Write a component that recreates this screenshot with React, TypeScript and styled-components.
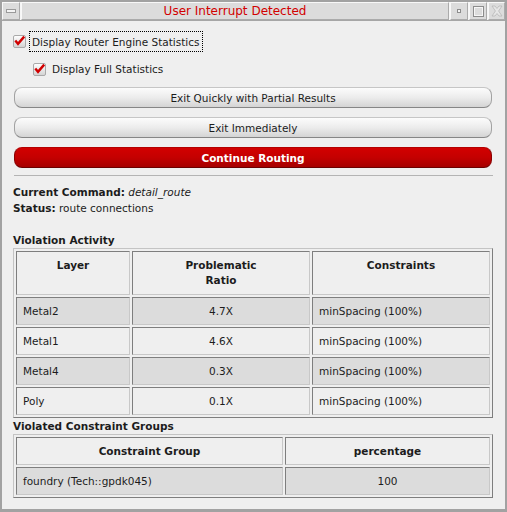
import React from "react";
import styled, { createGlobalStyle } from "styled-components";

const GlobalStyle = createGlobalStyle`
  html, body { margin: 0; padding: 0; background: #efefef; }
  body {
    font-family: "DejaVu Sans", sans-serif;
    font-size: 10.5px;
    color: #1c1c1c;
  }
  * { box-sizing: border-box; }
`;

const Window = styled.div`
  width: 507px;
  height: 512px;
  border: 2px solid #a2a2a2;
  border-bottom-width: 3px;
  background: #efefef;
  display: flex;
  flex-direction: column;
  overflow: hidden;
`;

const TitleBar = styled.div`
  display: flex;
  height: 19px;
  border-bottom: 1px solid #a6a6a6;
  background: #f6f6f6;
  gap: 1px;
`;

const TitleSeg = styled.div<{ $w?: number }>`
  ${(p) => (p.$w ? `width: ${p.$w}px;` : "flex: 1;")}
  height: 18px;
  background: #dcdcdc;
  border: 1px solid;
  border-color: #f8f8f8 #ababab #ababab #f8f8f8;
  display: flex;
  align-items: center;
  justify-content: center;
`;

const TitleText = styled.span`
  font-size: 12px;
  line-height: 16px;
  color: #d20000;
`;

const Content = styled.div`
  flex: 1;
  display: flex;
  flex-direction: column;
  padding: 0 12px 0 11px;
`;

const CheckRow = styled.div<{ $indent: number; $top: number; $h: number }>`
  display: flex;
  align-items: center;
  gap: 3px;
  height: ${(p) => p.$h}px;
  margin-top: ${(p) => p.$top}px;
  padding-left: ${(p) => p.$indent}px;
`;

const CheckLabel = styled.span<{ $focus?: boolean }>`
  display: inline-flex;
  align-items: center;
  height: 100%;
  padding: 0 2px;
  border: 1px dotted ${(p) => (p.$focus ? "#000" : "transparent")};
  line-height: 16px;
`;

const Buttons = styled.div`
  display: flex;
  flex-direction: column;
  gap: 9px;
  margin-top: 8px;
  padding: 0 1px;
`;

const Button = styled.button<{ $primary?: boolean }>`
  height: 21px;
  padding: 0;
  border-radius: 8px;
  border: 1px solid;
  border-color: ${(p) =>
    p.$primary ? "#b40000 #8a0000 #6c0000 #8a0000" : "#c6c6c6 #a2a2a2 #868686 #a2a2a2"};
  background: ${(p) =>
    p.$primary
      ? "linear-gradient(#d20000 0%, #c40000 50%, #a60000 100%)"
      : "linear-gradient(#fcfcfc 0%, #ececec 50%, #d4d4d4 100%)"};
  color: ${(p) => (p.$primary ? "#ffffff" : "#1c1c1c")};
  font-family: inherit;
  font-size: 10.5px;
  font-weight: ${(p) => (p.$primary ? "bold" : "normal")};
  line-height: 16px;
`;

const Separator = styled.div`
  height: 1px;
  margin: 7px 0 0 1px;
  background: #b4b4b4;
`;

const InfoBlock = styled.div`
  margin-top: 8px;
  line-height: 16px;
`;

const InfoLine = styled.div`
  height: 16px;
  white-space: nowrap;
`;

const Bold = styled.b`
  font-weight: bold;
`;

const Em = styled.i`
  font-style: italic;
`;

const SectionTitle = styled.div<{ $top: number }>`
  margin-top: ${(p) => p.$top}px;
  height: 16px;
  line-height: 16px;
  font-weight: bold;
`;

const Grid = styled.div<{ $cols: string; $rows: string }>`
  display: grid;
  grid-template-columns: ${(p) => p.$cols};
  grid-template-rows: ${(p) => p.$rows};
  gap: 2px;
  padding: 2px;
  width: 480px;
  border: 1px solid;
  border-color: #c4c4c4 #7e7e7e #7e7e7e #c4c4c4;
`;

const Cell = styled.div<{
  $head?: boolean;
  $shade?: boolean;
  $align?: "left" | "center";
  $top?: boolean;
}>`
  border: 1px solid;
  border-color: #7e7e7e #c8c8c8 #c8c8c8 #7e7e7e;
  background: ${(p) => (p.$shade ? "#dcdcdc" : "#efefef")};
  font-weight: ${(p) => (p.$head ? "bold" : "normal")};
  display: flex;
  flex-direction: column;
  justify-content: ${(p) => (p.$top ? "flex-start" : "center")};
  align-items: ${(p) => (p.$align === "left" ? "flex-start" : "center")};
  text-align: ${(p) => p.$align ?? "center"};
  padding: ${(p) => (p.$top ? "6px 6px 0" : "0 6px")};
  line-height: 15px;
  white-space: nowrap;
`;

function CheckIcon() {
  return (
    <svg width="13" height="13" viewBox="0 0 13 13">
      <defs>
        <linearGradient id="cbg" x1="0" y1="0" x2="0" y2="1">
          <stop offset="0" stopColor="#ffffff" />
          <stop offset="1" stopColor="#d2d2d2" />
        </linearGradient>
      </defs>
      <rect x="0.5" y="0.5" width="12" height="12" rx="1.5" fill="url(#cbg)" stroke="#a9a9a9" />
      <path d="M2.3 5.6 L5 8.8 L11.2 1.6" stroke="#d00000" strokeWidth="2.4" fill="none" strokeLinejoin="miter" />
    </svg>
  );
}

function MinIcon() {
  return (
    <svg width="10" height="4" viewBox="0 0 10 4">
      <rect x="0.5" y="0.5" width="9" height="3" fill="#f4f4f4" stroke="#9a9a9a" />
    </svg>
  );
}

function DotIcon() {
  return (
    <svg width="4" height="4" viewBox="0 0 4 4">
      <rect x="0.5" y="0.5" width="3" height="3" fill="#f4f4f4" stroke="#8c8c8c" />
    </svg>
  );
}

function MaxIcon() {
  return (
    <svg width="11" height="11" viewBox="0 0 11 11">
      <rect x="0.5" y="0.5" width="10" height="10" fill="none" stroke="#8c8c8c" />
      <rect x="1.5" y="1.5" width="8" height="8" fill="none" stroke="#f6f6f6" />
    </svg>
  );
}

function CloseIcon() {
  return (
    <svg width="12" height="12" viewBox="0 0 12 12">
      <path
        d="M1 1 L4 1 L6 3.5 L8 1 L11 1 L7.6 6 L11 11 L8 11 L6 8.5 L4 11 L1 11 L4.4 6 Z"
        fill="#e6e6e6"
        stroke="#b8b8b8"
        strokeWidth="0.8"
      />
    </svg>
  );
}

const layers = [
  { layer: "Metal2", ratio: "4.7X", c: "minSpacing (100%)" },
  { layer: "Metal1", ratio: "4.6X", c: "minSpacing (100%)" },
  { layer: "Metal4", ratio: "0.3X", c: "minSpacing (100%)" },
  { layer: "Poly", ratio: "0.1X", c: "minSpacing (100%)" },
];

export default function App() {
  return (
    <>
      <GlobalStyle />
      <Window>
        <TitleBar>
          <TitleSeg $w={18}>
            <MinIcon />
          </TitleSeg>
          <TitleSeg>
            <TitleText>User Interrupt Detected</TitleText>
          </TitleSeg>
          <TitleSeg $w={18}>
            <DotIcon />
          </TitleSeg>
          <TitleSeg $w={18}>
            <MaxIcon />
          </TitleSeg>
          <TitleSeg $w={17}>
            <CloseIcon />
          </TitleSeg>
        </TitleBar>
        <Content>
          <CheckRow $indent={0} $top={10} $h={21}>
            <CheckIcon />
            <CheckLabel $focus>Display Router Engine Statistics</CheckLabel>
          </CheckRow>
          <CheckRow $indent={20} $top={7} $h={20}>
            <CheckIcon />
            <CheckLabel>Display Full Statistics</CheckLabel>
          </CheckRow>
          <Buttons>
            <Button>Exit Quickly with Partial Results</Button>
            <Button>Exit Immediately</Button>
            <Button $primary>Continue Routing</Button>
          </Buttons>
          <Separator />
          <InfoBlock>
            <InfoLine>
              <Bold>Current Command:</Bold> <Em>detail_route</Em>
            </InfoLine>
            <InfoLine>
              <Bold>Status:</Bold> route connections
            </InfoLine>
          </InfoBlock>
          <SectionTitle $top={16}>Violation Activity</SectionTitle>
          <Grid $cols="114px 178px 178px" $rows="44px repeat(4, 28px)">
            <Cell $head $top>Layer</Cell>
            <Cell $head $top>
              <span>Problematic</span>
              <span>Ratio</span>
            </Cell>
            <Cell $head $top>Constraints</Cell>
            {layers.map((r, i) => (
              <React.Fragment key={r.layer}>
                <Cell $shade={i % 2 === 0} $align="left">{r.layer}</Cell>
                <Cell $shade={i % 2 === 0}>{r.ratio}</Cell>
                <Cell $shade={i % 2 === 0} $align="left">{r.c}</Cell>
              </React.Fragment>
            ))}
          </Grid>
          <SectionTitle $top={0}>Violated Constraint Groups</SectionTitle>
          <Grid $cols="267px 205px" $rows="28px 28px">
            <Cell $head>Constraint Group</Cell>
            <Cell $head>percentage</Cell>
            <Cell $shade $align="left">foundry (Tech::gpdk045)</Cell>
            <Cell $shade>100</Cell>
          </Grid>
        </Content>
      </Window>
    </>
  );
}
